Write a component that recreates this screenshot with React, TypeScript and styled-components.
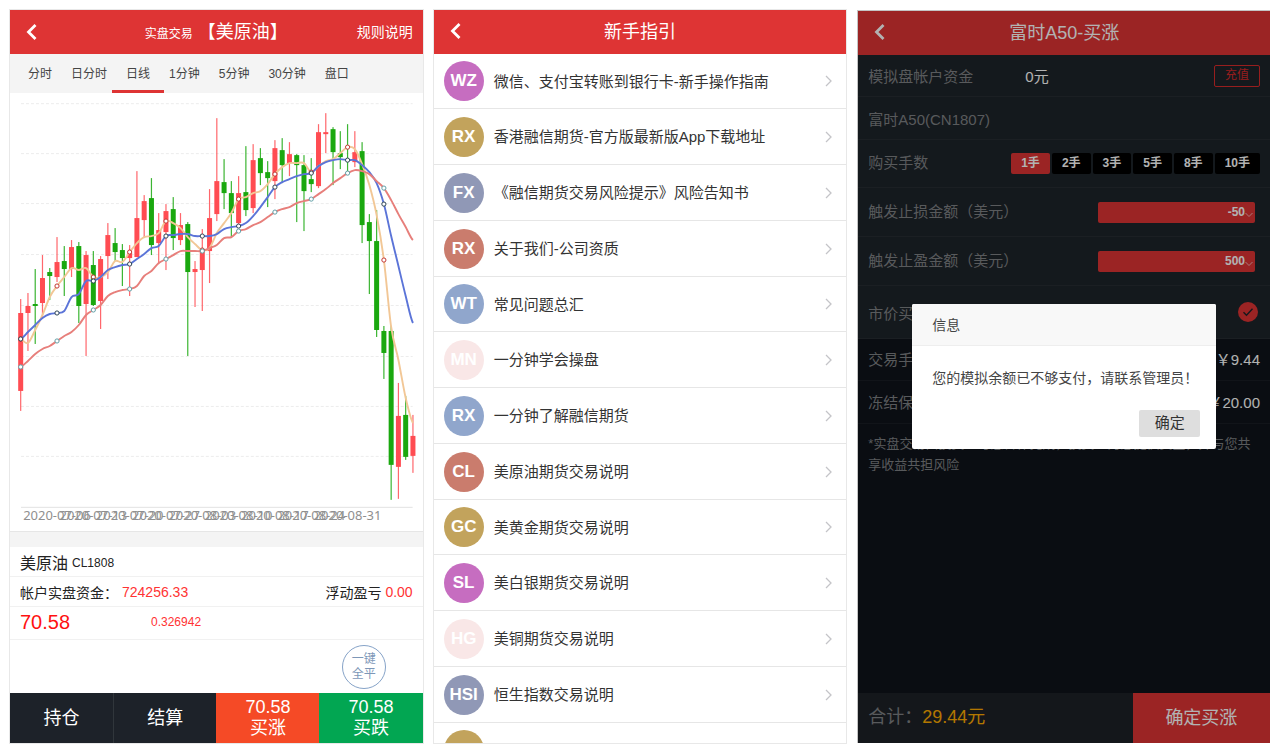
import React from "react";
import styled, { createGlobalStyle } from "styled-components";

const GlobalStyle = createGlobalStyle`
  *, *::before, *::after { box-sizing: border-box; }
  body {
    margin: 0;
    background: #fff;
    color: #333;
    font-family: "Liberation Sans", "Noto Sans CJK SC", sans-serif;
    font-size: 14px;
  }
  button, select, input { font: inherit; margin: 0; }
  button { border: 0; padding: 0; background: none; color: inherit; cursor: pointer; }
  ul { list-style: none; margin: 0; padding: 0; }
  a { color: inherit; text-decoration: none; }
  h1, h2, p { margin: 0; font-weight: 400; }
`;

/* ---------- shared shell ---------- */

const Page = styled.main`
  display: grid;
  grid-template-columns: repeat(3, minmax(0, 1fr));
  gap: 11px;
  height: 100vh;
  padding: 10px 10px 11px;
`;

const Screen = styled.section`
  display: flex;
  flex-direction: column;
  min-height: 0;
  overflow: hidden;
  background: #fff;
  box-shadow: 0 0 0 1px #e8e8e8;
`;

const DarkScreen = styled(Screen)`
  position: relative;
  background: #0f141a;
  border-top: 1px solid #c4c4c4;
  border-left: 1px solid #c4c4c4;
  box-shadow: none;
  color: #fff;
`;

const Bar = styled.header`
  display: grid;
  grid-template-columns: 1fr auto 1fr;
  align-items: center;
  flex: none;
  height: 44px;
  padding: 0 10px;
  background: #de3434;
  color: #fff;
`;

const BarTitle = styled.h1`
  font-size: 18px;
  line-height: 44px;
  white-space: nowrap;
`;

const Small = styled.small`
  font-size: 12px;
`;

const BackButton = styled.button`
  justify-self: start;
  display: flex;
  padding: 6px 6px 8px;
`;

const BarLink = styled.a`
  justify-self: end;
  padding-bottom: 4px;
  font-size: 14px;
`;

const Back = () => (
  <BackButton aria-label="返回">
    <svg width="12" height="16" viewBox="0 0 12 16" fill="none" stroke="#fff" strokeWidth="2.8">
      <path d="M9.500 1 2.500 8l7 7" />
    </svg>
  </BackButton>
);

/* ---------- chart screen ---------- */

const Tabs = styled.nav`
  display: flex;
  flex: none;
  gap: 19px;
  height: 39px;
  padding: 0 18px;
  background: #f4f4f4;
`;

const Tab = styled.button<{ $active?: boolean }>`
  position: relative;
  padding-top: 2px;
  font-size: 12px;
  line-height: 37px;
  color: #444;
  white-space: nowrap;
  &::after {
    content: "";
    display: ${(p) => (p.$active ? "block" : "none")};
    position: absolute;
    left: -14px;
    right: -14px;
    bottom: 0;
    height: 3px;
    background: #de3434;
  }
`;

const Chart = styled.svg`
  display: block;
  flex: none;
  width: 100%;
  height: 438px;
`;

const Divider = styled.div`
  flex: none;
  height: 16px;
  background: #f4f4f4;
  border-top: 1px solid #e6e6e6;
`;

const InfoRow = styled.div<{ $tall?: boolean }>`
  display: flex;
  flex: none;
  align-items: center;
  gap: 4px;
  height: ${(p) => (p.$tall ? 33 : 30)}px;
  padding: 0 10px ${(p) => (p.$tall ? 2 : 0)}px;
  border-bottom: 1px solid #f1f1f1;
  color: #222;
`;

const Name = styled.span`
  font-size: 16px;
`;

const Contract = styled.span`
  padding-top: 3px;
  font-size: 12px;
`;

const Red = styled.span`
  color: #f33;
`;

const Price = styled.strong`
  width: 127px;
  font-size: 20px;
  font-weight: 400;
  color: #f11;
`;

const Delta = styled.span`
  font-size: 12px;
  color: #f33;
`;

const Push = styled.span`
  margin-left: auto;
`;

const CloseArea = styled.div`
  display: flex;
  flex: 1;
  align-items: center;
  justify-content: flex-end;
  padding-right: 37px;
`;

const CloseAll = styled.button`
  width: 44px;
  height: 44px;
  border: 1px solid #86a3c8;
  border-radius: 50%;
  font-size: 12px;
  line-height: 15px;
  color: #7d97b8;
`;

const Actions = styled.footer`
  display: grid;
  grid-template-columns: repeat(4, 1fr);
  flex: none;
  height: 50px;
`;

const Action = styled.button<{ $bg: string; $line?: boolean }>`
  background: ${(p) => p.$bg};
  border-left: ${(p) => (p.$line ? "1px solid #30363b" : "0")};
  color: #fff;
  font-size: 18px;
  line-height: 21px;
`;

type Candle = [number, number, number, number, 0 | 1];

// high, body top, body bottom, low, rising
const candles: Candle[] = [
  [206, 220, 298, 318, 1], [200, 213, 220, 258, 1], [176, 211, 213, 251, 0],
  [162, 185, 210, 225, 1], [175, 179, 183, 207, 0], [144, 169, 184, 189, 1],
  [153, 168, 176, 203, 0], [147, 154, 176, 184, 1], [149, 153, 213, 230, 0],
  [158, 162, 211, 263, 1], [158, 172, 212, 213, 0], [163, 166, 208, 236, 1],
  [130, 142, 163, 186, 1], [135, 150, 159, 168, 0], [151, 157, 165, 193, 0],
  [152, 160, 165, 203, 1], [78, 125, 164, 164, 1], [102, 108, 127, 145, 1],
  [85, 105, 152, 162, 0], [120, 137, 150, 171, 1], [111, 118, 139, 177, 1],
  [104, 116, 145, 157, 0], [120, 132, 147, 152, 1], [129, 131, 179, 263, 0],
  [168, 176, 179, 214, 1], [136, 158, 177, 218, 1], [96, 125, 158, 190, 1],
  [25, 88, 121, 128, 1], [66, 89, 100, 116, 0], [88, 100, 120, 145, 0],
  [83, 100, 130, 132, 1], [53, 99, 117, 123, 0], [51, 67, 115, 120, 1],
  [55, 65, 80, 92, 0], [68, 79, 85, 114, 0], [47, 55, 88, 106, 1],
  [45, 57, 72, 90, 0], [49, 61, 70, 83, 1], [61, 62, 72, 129, 0],
  [62, 72, 98, 138, 0], [65, 86, 91, 99, 0], [31, 39, 93, 95, 1],
  [20, 39, 41, 60, 1], [34, 36, 59, 92, 0], [38, 60, 64, 76, 0],
  [31, 66, 68, 80, 0], [38, 59, 69, 74, 1], [49, 58, 132, 150, 0],
  [121, 129, 148, 201, 0], [117, 148, 237, 244, 0], [233, 238, 260, 286, 0],
  [233, 238, 372, 407, 0], [290, 323, 374, 406, 1], [303, 322, 364, 367, 0],
  [322, 343, 363, 380, 1],
];

const averages = [
  {
    stroke: "#f2c796",
    dot: "#c23531",
    values: [
      246, 250, 237, 222, 204, 193, 184, 175, 177, 175, 184, 184, 179, 168, 169, 159, 150, 144, 143,
      140, 128, 130, 135, 144, 151, 157, 155, 140, 130, 120, 106, 104, 100, 98, 91, 81, 74, 70, 70,
      70, 79, 73, 68, 66, 60, 54, 56, 71, 92, 122, 167, 234, 267, 305, 330,
    ],
  },
  {
    stroke: "#5b74d8",
    dot: "#2f4554",
    values: [
      246, 239, 232, 225, 221, 220, 218, 204, 201, 188, 188, 184, 177, 174, 172, 171, 166, 161, 155,
      153, 143, 142, 141, 141, 143, 143, 143, 141, 136, 134, 133, 130, 123, 114, 104, 94, 89, 86,
      83, 81, 80, 73, 69, 67, 66, 67, 67, 72, 79, 90, 111, 143, 173, 203, 230,
    ],
  },
  {
    stroke: "#e77f7b",
    dot: "#61a0a8",
    values: [
      274, 268, 261, 256, 253, 248, 243, 239, 232, 222, 217, 212, 203, 199, 197, 196, 193, 183, 178,
      170, 166, 162, 158, 158, 158, 158, 155, 152, 145, 144, 138, 136, 132, 129, 124, 119, 116, 114,
      110, 108, 106, 101, 96, 90, 85, 80, 77, 78, 81, 88, 95, 107, 121, 134, 147,
    ],
  },
];

const gridLines = [10, 60, 110, 161, 212, 263, 313, 363];

const dates = [
  "2020-07-06", "2020-07-13", "2020-07-20", "2020-07-27", "2020-08-03",
  "2020-08-10", "2020-08-17", "2020-08-24", "2020-08-31",
];

const xAt = (i: number) => 10.7 + i * 7.27;

// Smooth curve through the values, with horizontal-spaced control points.
const curve = (v: number[]) => {
  let d = `M${xAt(0)} ${v[0]}`;
  for (let i = 0; i < v.length - 1; i++) {
    const before = v[Math.max(i - 1, 0)];
    const after = v[Math.min(i + 2, v.length - 1)];
    const c1 = v[i] + (v[i + 1] - before) / 6;
    const c2 = v[i + 1] - (after - v[i]) / 6;
    d += `C${xAt(i) + 2.4} ${c1} ${xAt(i + 1) - 2.4} ${c2} ${xAt(i + 1)} ${v[i + 1]}`;
  }
  return d;
};

const CandleChart = () => (
  <Chart viewBox="0 0 413 438" role="img" aria-label="日线">
    {gridLines.map((y) => (
      <path key={y} d={`M11 ${y + 0.5}H403`} stroke="#ececec" strokeDasharray="3 2" />
    ))}
    <path d="M11 414.500H403" stroke="#e2e2e2" />
    {candles.map(([high, top, bottom, low, up], i) => (
      <g key={i} fill={up ? "#ff4c52" : "#1aa80f"}>
        <rect x={xAt(i) - 0.6} y={high} width="1.2" height={low - high} opacity="0.85" />
        <rect x={xAt(i) - 2.5} y={top} width="5" height={bottom - top} />
      </g>
    ))}
    {averages.map((line) => (
      <path key={line.dot} d={curve(line.values)} fill="none" stroke={line.stroke} strokeWidth="1.9" />
    ))}
    {averages.map((line) =>
      line.values.map((y, i) =>
        i % 5 === 0 ? (
          <circle key={line.dot + i} cx={xAt(i)} cy={y} r="2.1" fill="#fff" stroke={line.dot} />
        ) : null
      )
    )}
    {dates.map((date, i) => (
      <text
        key={date}
        x={xAt(5 + i * 5)}
        y="427"
        textAnchor="middle"
        fontFamily="Noto Sans, sans-serif"
        fontSize="13"
        fill="#8f8f8f"
      >
        {date}
      </text>
    ))}
  </Chart>
);

const TradeScreen = () => (
  <Screen>
    <Bar>
      <Back />
      <BarTitle>
        <Small>实盘交易</Small> 【美原油】
      </BarTitle>
      <BarLink href="#rules">规则说明</BarLink>
    </Bar>
    <Tabs>
      {["分时", "日分时", "日线", "1分钟", "5分钟", "30分钟", "盘口"].map((t) => (
        <Tab key={t} $active={t === "日线"}>
          {t}
        </Tab>
      ))}
    </Tabs>
    <CandleChart />
    <Divider />
    <InfoRow>
      <Name>美原油</Name>
      <Contract>CL1808</Contract>
    </InfoRow>
    <InfoRow>
      <span>帐户实盘资金：</span>
      <Red>724256.33</Red>
      <Push>浮动盈亏</Push>
      <Red>0.00</Red>
    </InfoRow>
    <InfoRow $tall>
      <Price>70.58</Price>
      <Delta>0.326942</Delta>
    </InfoRow>
    <CloseArea>
      <CloseAll>
        一键
        <br />
        全平
      </CloseAll>
    </CloseArea>
    <Actions>
      <Action $bg="#1d2229">持仓</Action>
      <Action $bg="#1d2229" $line>
        结算
      </Action>
      <Action $bg="#f54a26">
        70.58
        <br />
        买涨
      </Action>
      <Action $bg="#02a652">
        70.58
        <br />
        买跌
      </Action>
    </Actions>
  </Screen>
);

/* ---------- guide screen ---------- */

const List = styled.ul`
  flex: 1;
  min-height: 0;
  overflow: hidden;
`;

const Item = styled.li`
  height: 56px;
  border-bottom: 1px solid #e6e6e6;
  &:nth-child(4n + 1) {
    height: 55px;
  }
`;

const ItemLink = styled.a`
  display: flex;
  align-items: center;
  gap: 10px;
  height: 100%;
  padding: 0 14px 0 10px;
`;

const Avatar = styled.span<{ $bg: string }>`
  flex: none;
  width: 40px;
  height: 40px;
  border-radius: 50%;
  background: ${(p) => p.$bg};
  color: #fff;
  font-size: 17px;
  font-weight: 700;
  line-height: 40px;
  text-align: center;
`;

const ItemText = styled.span`
  flex: 1;
  padding-bottom: 2px;
  font-size: 15px;
  white-space: nowrap;
`;

const guides: [string, string, string][] = [
  ["WZ", "#c66dc0", "微信、支付宝转账到银行卡-新手操作指南"],
  ["RX", "#c2a35c", "香港融信期货-官方版最新版App下载地址"],
  ["FX", "#9098b6", "《融信期货交易风险提示》风险告知书"],
  ["RX", "#ca7c6d", "关于我们-公司资质"],
  ["WT", "#90a6cc", "常见问题总汇"],
  ["MN", "#f9e7e7", "一分钟学会操盘"],
  ["RX", "#90a6cc", "一分钟了解融信期货"],
  ["CL", "#ca7c6d", "美原油期货交易说明"],
  ["GC", "#c2a35c", "美黄金期货交易说明"],
  ["SL", "#c66dc0", "美白银期货交易说明"],
  ["HG", "#f9e7e7", "美铜期货交易说明"],
  ["HSI", "#9098b6", "恒生指数交易说明"],
  ["", "#c2a35c", ""],
];

const GuideScreen = () => (
  <Screen>
    <Bar>
      <Back />
      <BarTitle>新手指引</BarTitle>
    </Bar>
    <List>
      {guides.map(([code, bg, text], i) => (
        <Item key={i}>
          <ItemLink href="#guide">
            <Avatar $bg={bg}>{code}</Avatar>
            <ItemText>{text}</ItemText>
            <svg width="8" height="12" viewBox="0 0 8 12" fill="none" stroke="#c4c4c8" strokeWidth="1.3">
              <path d="M2 1 7 6l-5 5" />
            </svg>
          </ItemLink>
        </Item>
      ))}
    </List>
  </Screen>
);

/* ---------- order screen ---------- */

const Row = styled.div<{ $h: number; $deep?: boolean }>`
  display: flex;
  flex: none;
  align-items: center;
  height: ${(p) => p.$h}px;
  padding: 0 10px ${(p) => (p.$deep ? 2 : 0)}px;
  background: ${(p) => (p.$deep ? "#0f141a" : "#1e242a")};
  border-bottom: 1px solid ${(p) => (p.$deep ? "#191e24" : "#272d33")};
  font-size: 15px;
`;

const Label = styled.label<{ $raised?: boolean }>`
  padding-bottom: ${(p) => (p.$raised ? 4 : 0)}px;
  color: #7f8184;
  white-space: nowrap;
`;

const Balance = styled.span`
  margin-left: 52px;
`;

const Recharge = styled.button`
  width: 46px;
  height: 22px;
  margin-left: auto;
  border: 1px solid #d92b2b;
  border-radius: 2px;
  color: #d92b2b;
  font-size: 12px;
  line-height: 19px;
`;

const Lots = styled.div`
  display: flex;
  gap: 2px;
  margin-left: auto;
`;

const Lot = styled.button<{ $on?: boolean }>`
  height: 21px;
  padding: 0 10px;
  border-radius: 2px;
  background: ${(p) => (p.$on ? "#de3434" : "#000")};
  color: #fff;
  font-size: 12px;
  font-weight: 700;
  line-height: 21px;
  white-space: nowrap;
`;

const SelectBox = styled.div`
  position: relative;
  width: 157px;
  margin: 0 5px 0 auto;
  svg {
    position: absolute;
    right: 2px;
    bottom: 5px;
    pointer-events: none;
  }
`;

const Select = styled.select`
  display: block;
  appearance: none;
  width: 100%;
  height: 21px;
  padding: 0 10px 0 0;
  border: 0;
  border-radius: 2px;
  background: #de3434;
  color: #fff;
  font-size: 12px;
  font-weight: 700;
  text-align: right;
  text-align-last: right;
`;

const CheckBox = styled.span`
  position: relative;
  display: flex;
  margin: 0 2px 0 auto;
  svg {
    position: absolute;
    inset: 0;
    pointer-events: none;
  }
`;

const Check = styled.input`
  appearance: none;
  width: 20px;
  height: 20px;
  border-radius: 50%;
  background: #de3434;
`;

const Note = styled.p`
  flex: 1;
  padding: 9px 10px;
  color: #7f8184;
  font-size: 13px;
  line-height: 21px;
`;

const Total = styled.footer`
  display: grid;
  grid-template-columns: 2fr 1fr;
  flex: none;
  height: 50px;
  background: #1e2228;
  font-size: 18px;
  line-height: 48px;
`;

const Sum = styled.div`
  padding-left: 10px;
  color: #7f8184;
`;

const Amount = styled.span`
  color: #ffab00;
`;

const Confirm = styled.button`
  background: #de3434;
  color: #fff;
`;

const Backdrop = styled.div`
  position: absolute;
  inset: 0;
  display: flex;
  align-items: center;
  justify-content: center;
  padding-bottom: 2px;
  background: rgba(0, 0, 0, 0.3);
`;

const Dialog = styled.div`
  width: 304px;
  border-radius: 2px;
  background: #fff;
  color: #444;
  font-size: 14px;
`;

const DialogTitle = styled.h2`
  height: 42px;
  padding: 0 20px;
  border-bottom: 1px solid #eee;
  border-radius: 2px 2px 0 0;
  background: #f8f8f8;
  font-size: 14px;
  line-height: 42px;
`;

const DialogText = styled.p`
  padding: 20px 0 20px 20px;
  line-height: 24px;
  white-space: nowrap;
`;

const DialogFooter = styled.div`
  display: flex;
  justify-content: flex-end;
  padding: 0 16px 12px;
`;

const Ok = styled.button`
  width: 61px;
  height: 27px;
  border-radius: 2px;
  background: #dedede;
  color: #333;
  font-size: 15px;
  line-height: 26px;
`;

const LimitRow = ({ id, label, value }: { id: string; label: string; value: string }) => (
  <Row $h={49}>
    <Label htmlFor={id} $raised>
      {label}
    </Label>
    <SelectBox>
      <Select id={id} defaultValue={value}>
        <option>{value}</option>
      </Select>
      <svg width="8" height="6" viewBox="0 0 8 6" fill="none" stroke="#fff" strokeOpacity="0.6">
        <path d="M.5 1 4 4.500 7.500 1" />
      </svg>
    </SelectBox>
  </Row>
);

const OrderScreen = () => (
  <DarkScreen>
    <Bar>
      <Back />
      <BarTitle>富时A50-买涨</BarTitle>
    </Bar>
    <Row $h={42}>
      <Label as="span">模拟盘帐户资金</Label>
      <Balance>0元</Balance>
      <Recharge>充值</Recharge>
    </Row>
    <Row $h={43}>
      <Label as="span">富时A50(CN1807)</Label>
    </Row>
    <Row $h={48}>
      <Label as="span" $raised>
        购买手数
      </Label>
      <Lots>
        {["1手", "2手", "3手", "5手", "8手", "10手"].map((t) => (
          <Lot key={t} $on={t === "1手"}>
            {t}
          </Lot>
        ))}
      </Lots>
    </Row>
    <LimitRow id="stop-loss" label="触发止损金额（美元）" value="-50" />
    <LimitRow id="take-profit" label="触发止盈金额（美元）" value="500" />
    <Row $h={53}>
      <Label htmlFor="market">市价买入</Label>
      <CheckBox>
        <Check id="market" type="checkbox" defaultChecked />
        <svg width="20" height="20" viewBox="0 0 20 20" fill="none" stroke="#1e242a" strokeWidth="1.4">
          <path d="M5.500 10.300 8.500 13.200 14.500 6.800" />
        </svg>
      </CheckBox>
    </Row>
    <Row $h={42} $deep>
      <Label as="span">交易手续费</Label>
      <Push>￥9.44</Push>
    </Row>
    <Row $h={43} $deep>
      <Label as="span">冻结保证金</Label>
      <Push>￥20.00</Push>
    </Row>
    <Note>*实盘交易由投资人与您合作完成，投资人为您提供资金，并与您共享收益共担风险</Note>
    <Total>
      <Sum>
        合计：<Amount>29.44元</Amount>
      </Sum>
      <Confirm>确定买涨</Confirm>
    </Total>
    <Backdrop>
      <Dialog role="dialog" aria-labelledby="dialog-title">
        <DialogTitle id="dialog-title">信息</DialogTitle>
        <DialogText>您的模拟余额已不够支付，请联系管理员！</DialogText>
        <DialogFooter>
          <Ok>确定</Ok>
        </DialogFooter>
      </Dialog>
    </Backdrop>
  </DarkScreen>
);

export default function App() {
  return (
    <>
      <GlobalStyle />
      <Page>
        <TradeScreen />
        <GuideScreen />
        <OrderScreen />
      </Page>
    </>
  );
}
